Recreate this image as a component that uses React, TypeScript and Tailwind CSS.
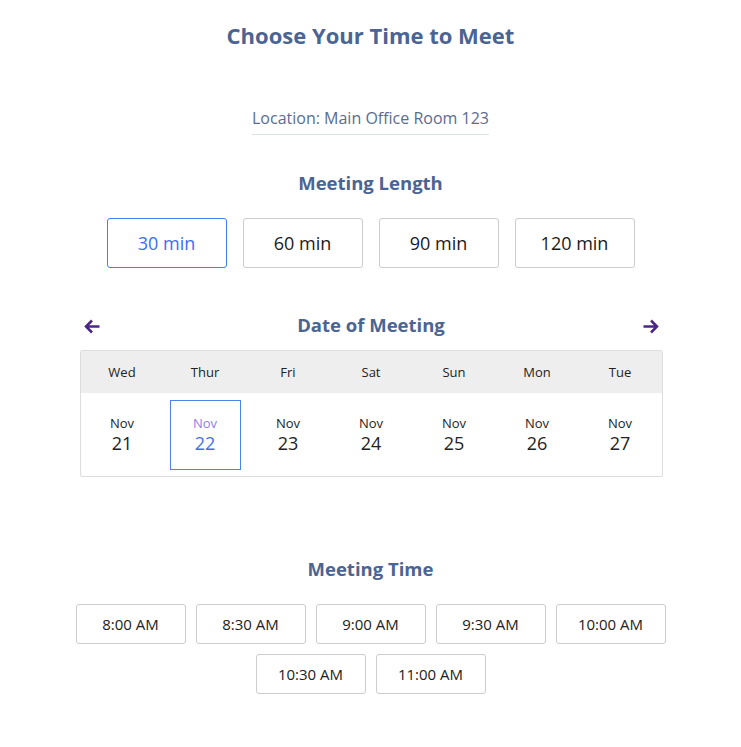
import React from "react";

const font = { fontFamily: '"Open Sans", "Noto Sans", sans-serif' };

function ArrowLeft() {
  return (
    <svg width="16" height="15" viewBox="0 0 16 15" fill="none" className="mt-[3px]">
      <path d="M15.5 7.5H2.5M8 1.5L2 7.5l6 6" stroke="#4b2686" strokeWidth="2.5" strokeLinecap="butt" strokeLinejoin="miter" />
    </svg>
  );
}
function ArrowRight() {
  return (
    <svg width="16" height="15" viewBox="0 0 16 15" fill="none" className="mt-[3px]">
      <path d="M0.5 7.5h13M8 1.5l6 6-6 6" stroke="#4b2686" strokeWidth="2.5" strokeLinecap="butt" strokeLinejoin="miter" />
    </svg>
  );
}

const lengths = ["30 min", "60 min", "90 min", "120 min"];
const days = [
  ["Wed", "21"],
  ["Thur", "22"],
  ["Fri", "23"],
  ["Sat", "24"],
  ["Sun", "25"],
  ["Mon", "26"],
  ["Tue", "27"],
];
const times = ["8:00 AM", "8:30 AM", "9:00 AM", "9:30 AM", "10:00 AM", "10:30 AM", "11:00 AM"];

export default function App() {
  return (
    <div style={font} className="w-full min-h-[747px] bg-white flex flex-col items-center pt-[20px]">
      <h1 className="text-[22px] leading-[30px] font-bold text-[#4a6493]">Choose Your Time to Meet</h1>

      <div className="mt-[56px] text-[16px] leading-[24px] text-[#5a6c92] pb-[4px] border-b border-[#dde3ea]">
        Location: Main Office Room 123
      </div>

      <h2 className="mt-[35px] text-[18.5px] leading-[26px] font-bold text-[#4a6493]">Meeting Length</h2>

      <div className="mt-[22px] flex gap-[16px]">
        {lengths.map((l, i) => (
          <div
            key={l}
            className={
              "w-[120px] h-[50px] flex items-center justify-center rounded-[3px] border text-[18px] " +
              (i === 0 ? "border-[#3b82f6] text-[#3b6ff0]" : "border-[#cccccc] text-[#1a1a1a]")
            }
          >
            {l}
          </div>
        ))}
      </div>

      <div className="mt-[44px] ml-[1px] w-[583px] flex items-center justify-between px-[4px]">
        <ArrowLeft />
        <h2 className="text-[18.5px] leading-[26px] font-bold text-[#4a6493]">Date of Meeting</h2>
        <ArrowRight />
      </div>

      <div className="mt-[12px] ml-[1px] w-[583px] border border-[#dddddd] rounded-[2px]">
        <div className="grid grid-cols-7 bg-[#eeeeee] h-[42px] pt-[2px]">
          {days.map(([d]) => (
            <div key={d} className="flex items-center justify-center text-[13px] text-[#222222]">
              {d}
            </div>
          ))}
        </div>
        <div className="grid grid-cols-7 h-[83px]">
          {days.map(([d, n], i) => (
            <div key={d} className="flex items-center justify-center">
              <div
                className={
                  "w-[71px] h-[70px] flex flex-col items-center justify-center " +
                  (i === 1 ? "border border-[#4a86e8]" : "")
                }
              >
                <div className={"text-[13px] leading-[16px] " + (i === 1 ? "text-[#8b7ff0]" : "text-[#222222]")}>Nov</div>
                <div className={"text-[18px] leading-[24px] " + (i === 1 ? "text-[#3f6fe8]" : "text-[#222222]")}>{n}</div>
              </div>
            </div>
          ))}
        </div>
      </div>

      <h2 className="mt-[79px] text-[18.5px] leading-[26px] font-bold text-[#4a6493]">Meeting Time</h2>

      <div className="mt-[22px] w-[590px] flex flex-wrap justify-center gap-[10px]">
        {times.map((t) => (
          <div
            key={t}
            className="w-[110px] h-[40px] flex items-center justify-center rounded-[3px] border border-[#cccccc] text-[15px] text-[#222222]"
          >
            {t}
          </div>
        ))}
      </div>
    </div>
  );
}
